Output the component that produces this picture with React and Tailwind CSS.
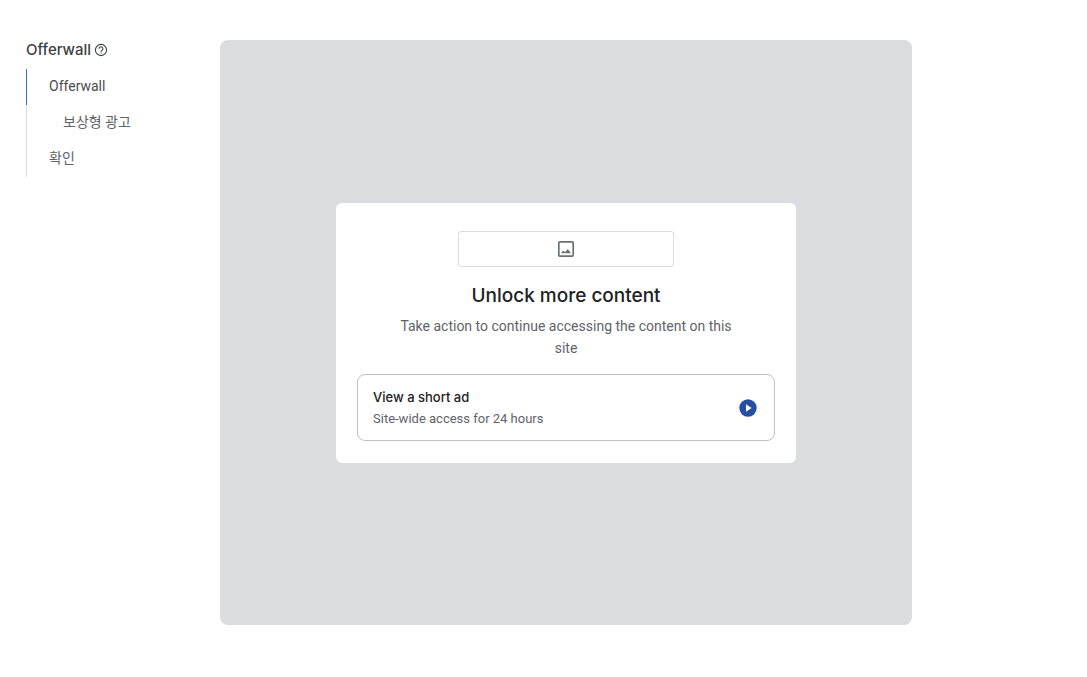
const steps = [
  { label: "Offerwall", className: "border-[#3c74c0] pl-[22px] text-[#4a4c50]", current: "step" },
  { label: "보상형 광고", className: "border-[#dadce0] pl-9 text-[#5f6368]" },
  { label: "확인", className: "border-[#dadce0] pl-[22px] text-[#5f6368]" },
];

function HelpIcon() {
  return (
    <svg viewBox="0 0 14 14" className="size-3.5" fill="none" stroke="currentColor" strokeWidth="1.1" aria-hidden="true">
      <circle cx="7" cy="7" r="5.6" />
      <path d="M5.1 5.7a1.9 1.9 0 1 1 3.1 1.4C7.5 7.6 7 7.9 7 8.7" />
      <path d="M7 9.4v1.2" />
    </svg>
  );
}

function ImageIcon() {
  return (
    <svg viewBox="0 0 18 18" className="size-[18px]" aria-hidden="true">
      <rect x="1.8" y="1.8" width="14.4" height="14.4" rx="1.2" fill="none" stroke="#6b6f74" strokeWidth="1.7" />
      <path d="M4 13.3l2.3-2.8 1.7 1.7 2.8-3.2 3.2 4.3z" fill="#6b6f74" />
    </svg>
  );
}

function PlayIcon() {
  return (
    <svg viewBox="0 0 18 18" className="size-[18px]" aria-hidden="true">
      <circle cx="9" cy="9" r="8.7" fill="#264ea3" />
      <path d="M7 5.2v7.6L12.6 9z" fill="#fff" />
    </svg>
  );
}

export default function App() {
  return (
    <div className="flex min-h-screen bg-white pt-10 pr-[175px] pb-[52px] pl-[26px] font-[Roboto,'Noto_Sans_CJK_KR',sans-serif]">
      <nav className="w-[194px] shrink-0" aria-label="Offerwall">
        <div className="flex h-5 items-center gap-[3px] text-[#3c4043]">
          <h2 className="font-[Inter,sans-serif] text-[15px] leading-5 font-medium">Offerwall</h2>
          <button type="button" aria-label="Help">
            <HelpIcon />
          </button>
        </div>
        <ol className="mt-[9px] text-sm">
          {steps.map((step) => (
            <li key={step.label}>
              <a
                href="#"
                aria-current={step.current}
                className={`flex h-9 items-center border-l pb-[3px] ${step.className}`}
              >
                {step.label}
              </a>
            </li>
          ))}
        </ol>
      </nav>
      <main className="flex min-w-0 flex-1 items-center justify-center rounded-lg bg-[#dadce0]">
        <section className="flex w-full max-w-[460px] flex-col items-center rounded-md bg-white px-[21px] pt-7 pb-[22px]">
          <div className="flex h-9 w-[216px] items-center justify-center rounded-[3px] border border-[#dadce0]">
            <ImageIcon />
          </div>
          <h1 className="mt-4 font-[Inter,sans-serif] text-[19px] leading-[26px] font-medium text-[#202124]">
            Unlock more content
          </h1>
          <p className="mt-1.5 max-w-[350px] text-center text-sm leading-[22px] text-[#5f6368]">
            Take action to continue accessing the content on this site
          </p>
          <button
            type="button"
            className="mt-[15px] flex h-[67px] w-full items-center justify-between rounded-lg border border-[#bdc1c6] pt-px pr-[17px] pl-[15px] text-left"
          >
            <span className="flex flex-col">
              <span className="font-[Inter,sans-serif] text-[13px] leading-[21px] font-medium text-[#202124]">
                View a short ad
              </span>
              <span className="text-[13px] leading-[21px] text-[#5f6368]">Site-wide access for 24 hours</span>
            </span>
            <PlayIcon />
          </button>
        </section>
      </main>
    </div>
  );
}
